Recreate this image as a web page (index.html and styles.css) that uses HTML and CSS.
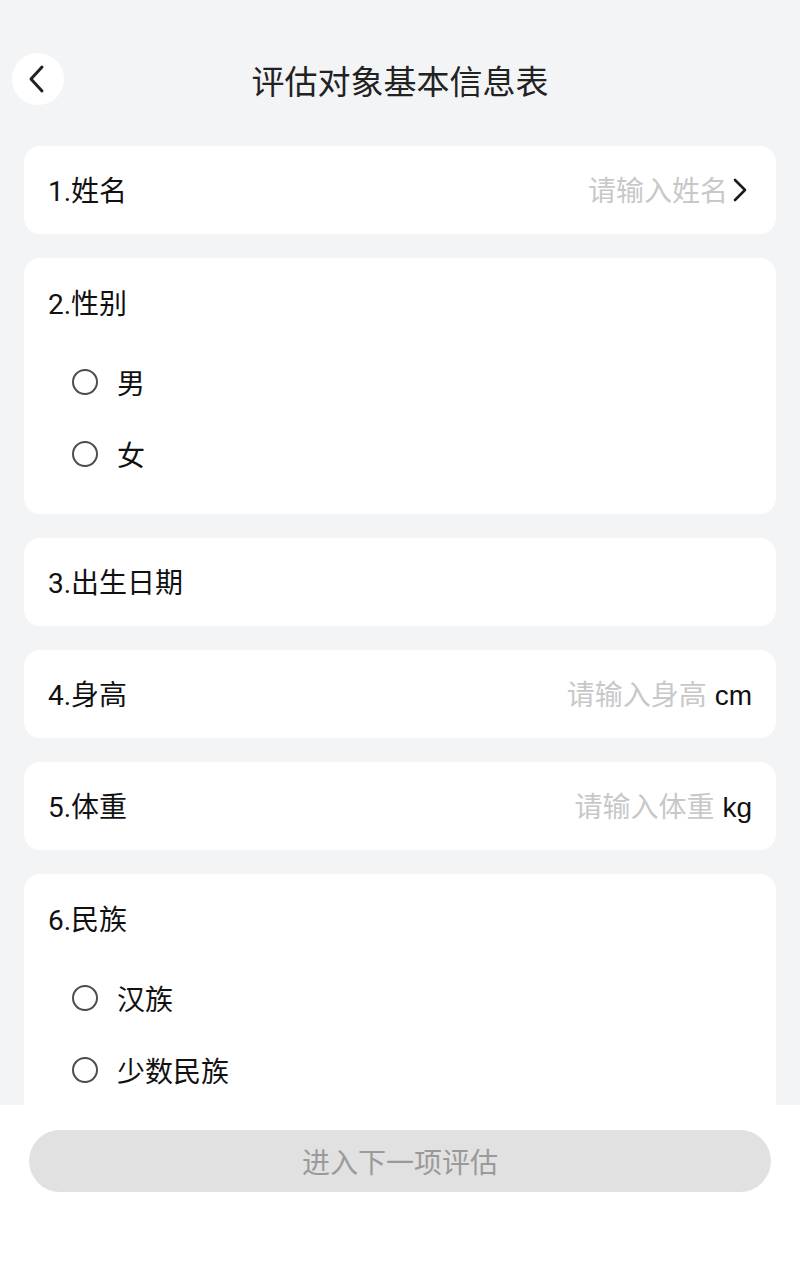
FILE: index.html
```html
<!DOCTYPE html>
<html lang="zh-CN">
<head>
<meta charset="utf-8">
<title>评估对象基本信息表</title>
<link rel="stylesheet" href="styles.css">
</head>
<body>
<header class="header">
  <div class="back">
    <svg width="22" height="30" viewBox="0 0 22 30"><path d="M16 3 L5 15 L16 27" fill="none" stroke="#222" stroke-width="3" stroke-linecap="round" stroke-linejoin="round"/></svg>
  </div>
  <h1 class="title">评估对象基本信息表</h1>
</header>
<main class="list">
  <section class="card row">
    <span class="label">1.姓名</span>
    <span class="value"><span class="ph">请输入姓名</span>
      <svg class="chev" width="16" height="24" viewBox="0 0 16 24"><path d="M3 2 L13 12 L3 22" fill="none" stroke="#1a1a1a" stroke-width="2.6" stroke-linecap="round" stroke-linejoin="round"/></svg>
    </span>
  </section>
  <section class="card">
    <div class="label">2.性别</div>
    <div class="options">
      <div class="opt"><span class="radio"></span><span>男</span></div>
      <div class="opt"><span class="radio"></span><span>女</span></div>
    </div>
  </section>
  <section class="card row">
    <span class="label">3.出生日期</span>
  </section>
  <section class="card row">
    <span class="label">4.身高</span>
    <span class="value"><span class="ph">请输入身高</span><span class="unit">cm</span></span>
  </section>
  <section class="card row">
    <span class="label">5.体重</span>
    <span class="value"><span class="ph">请输入体重</span><span class="unit">kg</span></span>
  </section>
  <section class="card">
    <div class="label">6.民族</div>
    <div class="options">
      <div class="opt"><span class="radio"></span><span>汉族</span></div>
      <div class="opt"><span class="radio"></span><span>少数民族</span></div>
    </div>
  </section>
</main>
<footer class="footer">
  <button class="next">进入下一项评估</button>
</footer>
</body>
</html>
```
FILE: styles.css
```css
* { box-sizing: border-box; }
html, body { margin: 0; padding: 0; }
body {
  background: #f3f4f6;
  font-family: Roboto, "Noto Sans CJK SC", sans-serif;
  color: #111;
  width: 800px;
  height: 1280px;
  overflow: hidden;
}
.header {
  position: relative;
  height: 146px;
  padding-top: 53px;
  display: flex;
  justify-content: center;
}
.back {
  position: absolute;
  left: 12px;
  top: 53px;
  width: 52px;
  height: 52px;
  border-radius: 50%;
  background: #fff;
  display: flex;
  align-items: center;
  justify-content: center;
  padding-right: 3px;
}
.title {
  margin: 0;
  height: 54px;
  line-height: 54px;
  font-size: 33px;
  font-weight: 400;
  color: #222;
  font-family: "Noto Sans CJK SC", sans-serif;
}
.list {
  display: flex;
  flex-direction: column;
  gap: 24px;
  padding: 0 24px;
}
.card {
  background: #fff;
  border-radius: 16px;
  padding: 24px;
}
.row {
  display: flex;
  align-items: center;
  justify-content: space-between;
  height: 88px;
}
.label {
  font-size: 28px;
  line-height: 40px;
  padding-top: 3px;
  color: #111;
}
.value {
  display: flex;
  align-items: center;
  font-size: 28px;
  line-height: 40px;
  padding-top: 3px;
}
.ph { color: #c8c8c8; }
.unit {
  color: #111;
  margin-left: 8px;
  font-family: "Liberation Sans", Arial, sans-serif;
}
.chev { margin-left: 4px; margin-right: 4px; margin-top: -3px; }
.options {
  margin-top: 21px;
  display: flex;
  flex-direction: column;
}
.opt {
  height: 72px;
  display: flex;
  align-items: center;
  padding-left: 24px;
  font-size: 28px;
  color: #111;
}
.radio {
  width: 26px;
  height: 26px;
  border: 2.8px solid #4d4d4d;
  border-radius: 50%;
  margin-right: 19px;
}
.footer {
  position: fixed;
  left: 0;
  bottom: 0;
  width: 800px;
  height: 175px;
  background: #fff;
  padding: 25px 29px 0;
}
.next {
  width: 100%;
  height: 62px;
  border: none;
  border-radius: 31px;
  background: #e1e1e1;
  color: #9a9a9a;
  font-size: 28px;
  font-family: "Noto Sans CJK SC", sans-serif;
  padding: 0;
}
```
